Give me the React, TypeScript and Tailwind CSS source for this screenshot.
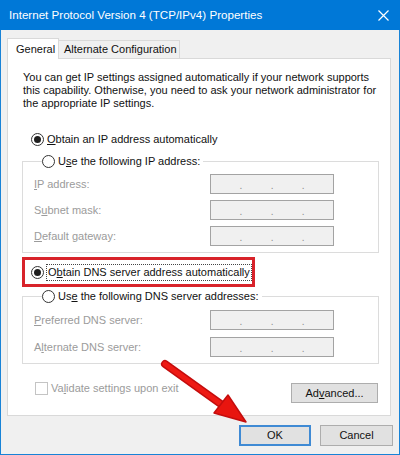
import type { ReactNode } from "react";

function Radio({ checked }: { checked?: boolean }) {
    return (
        <span className="w-[13px] h-[13px] rounded-full border border-[#333333] bg-white flex items-center justify-center shrink-0">
            {checked && <span className="w-[7px] h-[7px] rounded-full bg-[#1f1f1f]" />}
        </span>
    );
}

function IpBox() {
    return (
        <div className="w-[124px] h-[20px] border border-[#a3a3a3] bg-[#f0f0f0] flex items-center text-[#8d8d8d] text-[10px] leading-none">
            <span className="flex-1" />
            <span className="pt-[4px]">.</span>
            <span className="flex-1" />
            <span className="pt-[4px]">.</span>
            <span className="flex-1" />
            <span className="pt-[4px]">.</span>
            <span className="flex-1" />
        </div>
    );
}

function Field({ label, gap }: { label: ReactNode; gap: string }) {
    return (
        <div className={`flex items-center h-[20px] ${gap}`}>
            <span className="flex-1 text-[#9b9b9b]">{label}</span>
            <IpBox />
        </div>
    );
}

export default function App() {
    return (
        <div
            className="w-[400px] h-[455px] flex flex-col bg-[#f0f0f0] border-x border-b border-[#1883d7] text-[11px] text-[#111111] relative whitespace-nowrap"
            style={{ fontFamily: '"Liberation Sans", Arial, sans-serif' }}
        >
            {/* title bar */}
            <div className="h-[30px] bg-[#0078d7] -mx-px flex items-center justify-between pl-[9px] pr-[11px] text-white shrink-0">
                <span className="text-[11.6px]">Internet Protocol Version 4 (TCP/IPv4) Properties</span>
                <svg width="11" height="11" viewBox="0 0 11 11">
                    <path d="M0.5 0.5 L10.5 10.5 M10.5 0.5 L0.5 10.5" stroke="white" strokeWidth="1.2" />
                </svg>
            </div>

            <div className="flex-1 flex flex-col pl-[6px] pr-[6px]">
                {/* tabs */}
                <div className="flex items-end mt-[8px] h-[20px] relative z-10">
                    <div className="h-[21px] w-[52px] bg-white border border-b-0 border-[#d9d9d9] flex items-center pl-[8px] -mb-px">
                        General
                    </div>
                    <div className="h-[18px] w-[121px] bg-[#f0f0f0] border border-l-0 border-b-0 border-[#d9d9d9] flex items-center pl-[5px]">
                        Alternate Configuration
                    </div>
                </div>

                {/* panel */}
                <div className="mr-[2px] bg-white border border-[#d9d9d9] h-[358px] pl-[14px] pr-[11px]">
                    <p className="mt-[12px] leading-[13px] pl-px whitespace-normal">
                        You can get IP settings assigned automatically if your network supports
                        this capability. Otherwise, you need to ask your network administrator
                        for the appropriate IP settings.
                    </p>

                    <div className="flex items-center gap-[3px] h-[20px] mt-[19px] pl-[9px]">
                        <Radio checked />
                        <span><u>O</u>btain an IP address automatically</span>
                    </div>

                    <div className="mt-[12px] border border-[#dcdcdc] pl-[11px] pr-[44px] pb-[6px]">
                        <div className="-mt-[11px] h-[20px] w-fit bg-white flex items-center gap-[3px] ml-[8px] pr-[3px]">
                            <Radio />
                            <span>U<u>s</u>e the following IP address:</span>
                        </div>
                        <Field label={<><u>I</u>P address:</>} gap="mt-[3px]" />
                        <Field label={<>S<u>u</u>bnet mask:</>} gap="mt-[6px]" />
                        <Field label={<><u>D</u>efault gateway:</>} gap="mt-[6px]" />
                    </div>

                    <div className="mt-[4px] w-[233px] h-[30px] border-[3px] border-[#d8232a] flex items-center gap-[2px] pl-[6px]">
                        <Radio checked />
                        <span className="border border-dotted border-[#444444] px-[1px] leading-[15px]">
                            O<u>b</u>tain DNS server address automatically
                        </span>
                    </div>

                    <div className="mt-[9px] border border-[#dcdcdc] pl-[11px] pr-[44px] pb-[6px]">
                        <div className="-mt-[10px] h-[18px] w-fit bg-white flex items-center gap-[3px] ml-[8px] pr-[3px]">
                            <Radio />
                            <span>Us<u>e</u> the following DNS server addresses:</span>
                        </div>
                        <Field label={<><u>P</u>referred DNS server:</>} gap="mt-[5px]" />
                        <Field label={<>A<u>l</u>ternate DNS server:</>} gap="mt-[7px]" />
                    </div>

                    <div className="flex items-start justify-between mt-[14px] pr-px">
                        <div className="flex items-center gap-[3px] h-[20px] pl-[13px] text-[#9b9b9b]">
                            <span className="w-[13px] h-[13px] border border-[#c4c4c4] bg-white" />
                            <span>Va<u>l</u>idate settings upon exit</span>
                        </div>
                        <button className="mt-[5px] w-[87px] h-[20px] bg-[#e1e1e1] border border-[#adadad] text-[#111111]">
                            Ad<u>v</u>anced...
                        </button>
                    </div>
                </div>

                {/* buttons */}
                <div className="flex justify-end gap-[9px] mt-[9px]">
                    <button className="w-[72px] h-[21px] bg-[#e1e1e1] border-2 border-[#3f8ad4]">OK</button>
                    <button className="w-[73px] h-[21px] bg-[#e1e1e1] border border-[#adadad]">Cancel</button>
                </div>
            </div>

            {/* red arrow pointing at OK */}
            <svg className="absolute left-0 top-0 pointer-events-none" width="400" height="455" viewBox="0 0 400 455">
                <line x1="164" y1="364" x2="224" y2="407" stroke="#c40d0d" strokeWidth="8" strokeLinecap="round" />
                <line x1="164" y1="364" x2="224" y2="407" stroke="#ee1a14" strokeWidth="5" strokeLinecap="round" />
                <polygon points="245,422 213,413 227,395" fill="#e8150f" stroke="#c40d0d" strokeWidth="1.5" strokeLinejoin="round" />
            </svg>
        </div>
    );
}
